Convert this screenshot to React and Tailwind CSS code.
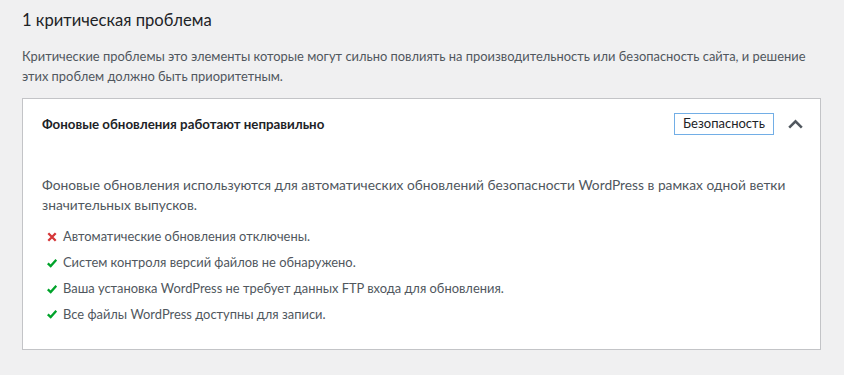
import React from "react";

const font = { fontFamily: 'Lato, "Noto Sans", sans-serif' };

const checks = [
  { ok: false, text: "Автоматические обновления отключены." },
  { ok: true, text: "Систем контроля версий файлов не обнаружено." },
  { ok: true, text: "Ваша установка WordPress не требует данных FTP входа для обновления." },
  { ok: true, text: "Все файлы WordPress доступны для записи." },
];

const CrossIcon = () => (
  <svg width="10" height="10" viewBox="0 0 10 10" className="shrink-0">
    <path d="M1.3 1.3 L8.7 8.7 M8.7 1.3 L1.3 8.7" stroke="#d63638" strokeWidth="2.3" />
  </svg>
);

const CheckIcon = () => (
  <svg width="10" height="10" viewBox="0 0 10 10" className="shrink-0">
    <path d="M0.8 5.3 L3.7 8 L9.3 1.8" stroke="#00a32a" strokeWidth="2.3" fill="none" />
  </svg>
);

const App = () => {
  return (
    <div className="w-[844px] h-[375px] bg-[#f0f0f1] text-[#1d2327] overflow-hidden" style={font}>
      <div className="pl-[22px] pr-[23px] pt-[8px]">
        <h2 className="text-[16.6px] leading-[24px] mb-[15px]">1 критическая проблема</h2>
        <p className="text-[12.9px] leading-[19.5px] text-[#50575e] mb-[12px]">
          Критические проблемы это элементы которые могут сильно повлиять на производительность или безопасность сайта, и решение
          этих проблем должно быть приоритетным.
        </p>
        <div className="bg-white border border-[#c3c4c7]">
          <div className="flex items-center h-[50px] pl-[19px] pr-[17px]">
            <h3 className="flex-1 text-[13.3px] font-bold pt-[2px]">Фоновые обновления работают неправильно</h3>
            <span className="border border-[#72aee6] text-[13px] h-[22px] w-[100px] flex items-center justify-center mr-[14px]">
              Безопасность
            </span>
            <svg width="15" height="10" viewBox="0 0 15 10">
              <path d="M1.2 8.6 L7.5 2.4 L13.8 8.6" stroke="#50575e" strokeWidth="2.6" fill="none" />
            </svg>
          </div>
          <div className="pl-[19px] pr-[19px] pt-[26px] pb-[25px] text-[#50575e]">
            <p className="text-[13.75px] leading-[19.5px] mb-[13px]">
              Фоновые обновления используются для автоматических обновлений безопасности WordPress в рамках одной ветки
              значительных выпусков.
            </p>
            <ul className="flex flex-col gap-[5.8px] text-[12.9px]">
              {checks.map((c) => (
                <li key={c.text} className="flex items-center h-[20px] pl-[5px] gap-[6px]">
                  {c.ok ? <CheckIcon /> : <CrossIcon />}
                  <span>{c.text}</span>
                </li>
              ))}
            </ul>
          </div>
        </div>
      </div>
    </div>
  );
};

export default App;
